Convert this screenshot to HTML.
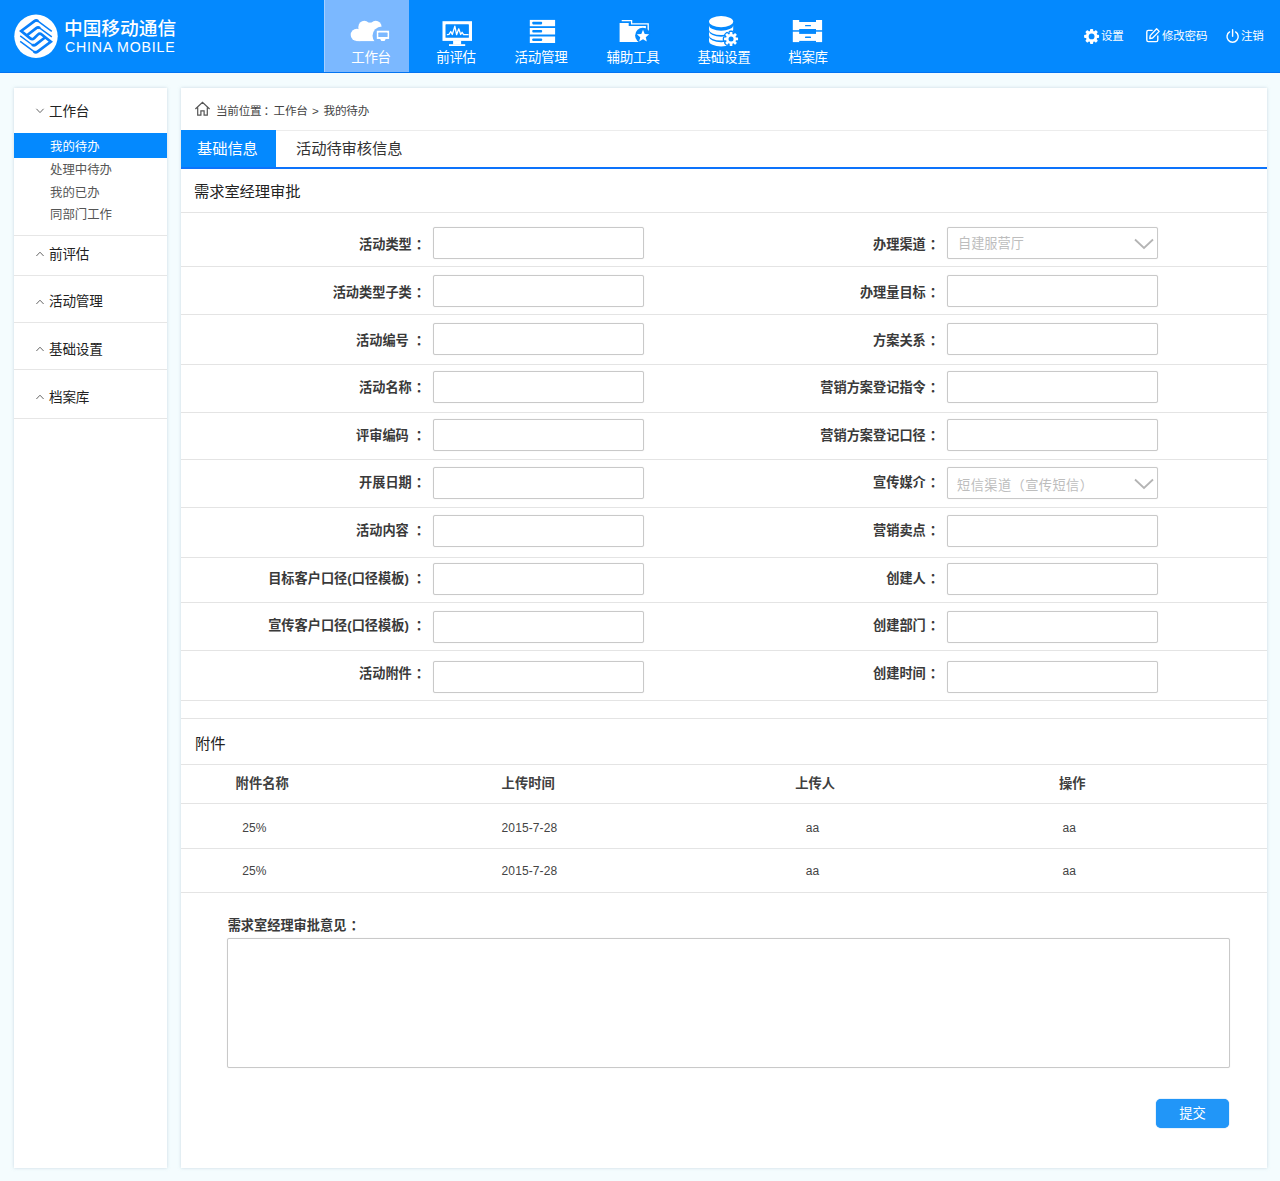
<!DOCTYPE html>
<html lang="zh-CN">
<head>
<meta charset="utf-8">
<title>我的待办</title>
<style>
*{box-sizing:border-box;margin:0;padding:0}
html,body{width:1280px;height:1181px;overflow:hidden}
body{position:relative;background:#f4fcfe;font-family:"Liberation Sans","Noto Sans CJK SC",sans-serif;color:#333;}
.abs{position:absolute}
#hdr{position:absolute;left:0;top:0;width:1280px;height:73px;background:#0489fe;border-bottom:1px solid #0274f2}
#hdr .act{position:absolute;left:324px;top:0;width:85px;height:72px;background:#7bb8ff;border-left:1px solid #a6cfff}
.nl{position:absolute;top:49px;width:100px;text-align:center;color:#fff;font-size:13.5px;line-height:18px;letter-spacing:-0.3px;white-space:nowrap}
.logo1{position:absolute;left:64px;top:17px;color:#fff;font-size:18.7px;line-height:24px;white-space:nowrap;font-weight:500}
.logo2{position:absolute;left:65px;top:38px;color:#fff;font-size:14.2px;line-height:18px;white-space:nowrap;letter-spacing:0.8px}
.tr{position:absolute;top:27px;color:#fff;font-size:11.5px;line-height:18px;white-space:nowrap;letter-spacing:-0.2px}
.panel{position:absolute;background:#fff;box-shadow:0 0 3px rgba(160,185,200,.5)}
#side{left:14px;top:88px;width:153px;height:1080px}
#main{left:181px;top:88px;width:1086px;height:1080px}
.sh{position:absolute;left:35px;font-size:13.6px;line-height:20px;color:#222;white-space:nowrap;letter-spacing:-0.2px}
.sline{position:absolute;left:0;width:153px;height:1px;background:#e6e6e6}
.si{position:absolute;left:36px;font-size:12.4px;line-height:18px;color:#555;white-space:nowrap}
.hl{position:absolute;left:0;width:1086px;height:1px;background:#e4e4e4}
.lb{position:absolute;font-size:13.2px;font-weight:700;line-height:20px;color:#3a3a3a;text-align:right;white-space:nowrap}
.c{margin-left:4px}
.c2{margin-left:7px}
.bc{position:absolute;font-size:11.6px;line-height:18px;color:#444;white-space:nowrap;letter-spacing:-0.25px}
.in{position:absolute;width:211px;height:32px;border:1px solid #c9c9c9;border-radius:2px;background:#fff;box-shadow:0 0 1px rgba(0,0,0,.15)}
.ph{position:absolute;left:10px;top:6px;font-size:13.2px;line-height:20px;color:#bdbdbd;white-space:nowrap}
.th{position:absolute;font-size:13.3px;font-weight:700;line-height:20px;color:#404040;white-space:nowrap}
.td{position:absolute;letter-spacing:0.1px;font-size:12px;line-height:20px;color:#444;white-space:nowrap}
</style>
</head>
<body>
<div id="hdr">
  <div class="act"></div>
  <!--LOGO-->
<svg class="abs" style="left:13px;top:13px" width="46" height="46" viewBox="0 0 46 46">
<circle cx="23" cy="23.3" r="21.7" fill="#fff"/>
<g fill="none" stroke="#0a7ffa" stroke-linejoin="miter" stroke-linecap="butt">
<path d="M25.15 8.25 L24.97 8.11 Q23.20 6.80 21.44 8.12 L8.20 18.00 L17.28 25.36 Q19.30 27.00 21.16 25.19 L24.84 21.61 Q26.70 19.80 28.72 21.44 L37.80 28.80 L24.56 38.68 Q22.80 40.00 21.03 38.69 L20.85 38.55" stroke-width="2.7"/>
<path d="M38.80 18.40 L24.97 8.11 Q23.20 6.80 21.44 8.12 L20.00 9.20" stroke-width="1.5"/>
<path d="M7.20 28.40 L21.03 38.69 Q22.80 40.00 24.56 38.68 L26.00 37.60" stroke-width="1.5"/>
<path d="M26.95 15.23 L26.77 15.10 Q25.00 13.80 23.26 15.14 L13.70 22.50" stroke-width="2.7"/>
<path d="M38.80 23.90 L26.78 15.10 Q25.00 13.80 23.23 15.10 L22.00 16.00" stroke-width="1.4"/>
<path d="M19.05 31.57 L19.23 31.70 Q21.00 33.00 22.74 31.66 L32.30 24.30" stroke-width="2.7"/>
<path d="M7.20 22.90 L19.22 31.70 Q21.00 33.00 22.77 31.70 L24.00 30.80" stroke-width="1.4"/>
</g></svg>
<!--/LOGO-->
  <div class="logo1">中国移动通信</div>
  <div class="logo2">CHINA MOBILE</div>
  <!--NAVICONS-->
<svg class="abs" style="left:348px;top:16px" width="46" height="30" viewBox="0 0 46 30">
<g fill="#fff"><circle cx="8.9" cy="18.9" r="6.2"/><ellipse cx="22" cy="9.2" rx="3.2" ry="2.6"/><circle cx="16.3" cy="10.7" r="5.9"/><circle cx="27.7" cy="10.7" r="5.9"/><rect x="10.6" y="10.7" width="23" height="14.4"/><rect x="8.4" y="18" width="4" height="7.1"/></g>
<circle cx="33.8" cy="19.8" r="9.3" fill="#7bb8ff"/>
<rect x="28.8" y="14.75" width="12.3" height="8.2" fill="#fff"/>
<rect x="30.3" y="16.6" width="9.3" height="4.5" rx="0.6" fill="#7bb8ff"/>
<path d="M32.2 22.9 H37.7 L36.6 24.9 H33.3 Z" fill="#fff"/>
</svg>
<svg class="abs" style="left:440px;top:18px" width="34" height="30" viewBox="0 0 34 30">
<rect x="2.5" y="3.2" width="29.5" height="19.7" fill="#fff"/>
<rect x="5.5" y="6.3" width="23.4" height="13.5" rx="0.6" fill="#0489fe"/>
<path d="M7.4 16.7 L9 16.4 L10.75 13.5 L12.3 16.5 L14.85 8.2 L16.6 16.7 L18.75 10.8 L20.7 16.5 L22.1 14.3 L23.6 16.7 L28.1 16.7" fill="none" stroke="#fff" stroke-width="1.3" stroke-linejoin="round" stroke-linecap="round"/>
<rect x="13.1" y="22.5" width="8" height="4" fill="#fff"/>
<rect x="9" y="26.2" width="16.2" height="1.8" fill="#fff"/>
</svg>
<svg class="abs" style="left:528px;top:18px" width="30" height="28" viewBox="0 0 30 28">
<g fill="#fff"><rect x="1.8" y="1.9" width="25.3" height="6.3"/><rect x="1.8" y="10" width="25.3" height="6.5"/><rect x="1.8" y="18.5" width="25.3" height="6.5"/></g>
<g fill="#0489fe"><rect x="4.3" y="3.7" width="9.8" height="2.7" rx="0.8"/><rect x="4.3" y="11.9" width="9.8" height="2.7" rx="0.8"/><rect x="4.3" y="20.4" width="9.8" height="2.7" rx="0.8"/></g>
</svg>
<svg class="abs" style="left:617px;top:17px" width="36" height="28" viewBox="0 0 36 28">
<path d="M4.7 3.6 H14.6 V6.9 H31.2 V15" fill="none" stroke="#fff" stroke-width="1.3"/>
<path d="M2.6 5.9 H11.7 V9 H28.9 V25.1 H2.6 Z" fill="#fff"/>
<circle cx="25.8" cy="18.5" r="7.7" fill="#0489fe"/>
<path d="M26.00 12.80 L27.70 16.95 L32.18 17.29 L28.76 20.20 L29.82 24.56 L26.00 22.20 L22.18 24.56 L23.24 20.20 L19.82 17.29 L24.30 16.95 Z" fill="#fff"/>
</svg>
<svg class="abs" style="left:706px;top:14px" width="36" height="34" viewBox="0 0 36 34">
<g fill="#fff">
<ellipse cx="15.1" cy="7.6" rx="12.1" ry="5.55"/>
<path d="M3 11.2 A12.1 5.55 0 0 0 27.2 11.2 V15.5 A12.1 5.55 0 0 1 3 15.5 Z"/>
<path d="M3 17.1 A12.1 5.55 0 0 0 27.2 17.1 V21 A12.1 5.55 0 0 1 3 21 Z"/>
<path d="M3 22.6 A12.1 5.55 0 0 0 27.2 22.6 V26.9 A12.1 5.55 0 0 1 3 26.9 Z"/>
</g>
<g fill="#0489fe" stroke="#0489fe" stroke-width="2.6" stroke-linejoin="round"><g transform="translate(25.05,24.9)"><rect x="-1.35" y="-7" width="2.7" height="14" rx="0.5" transform="rotate(0)"/><rect x="-1.35" y="-7" width="2.7" height="14" rx="0.5" transform="rotate(45)"/><rect x="-1.35" y="-7" width="2.7" height="14" rx="0.5" transform="rotate(90)"/><rect x="-1.35" y="-7" width="2.7" height="14" rx="0.5" transform="rotate(135)"/><circle r="5"/></g></g>
<g fill="#fff"><g transform="translate(25.05,24.9)"><rect x="-1.35" y="-7" width="2.7" height="14" rx="0.5" transform="rotate(0)"/><rect x="-1.35" y="-7" width="2.7" height="14" rx="0.5" transform="rotate(45)"/><rect x="-1.35" y="-7" width="2.7" height="14" rx="0.5" transform="rotate(90)"/><rect x="-1.35" y="-7" width="2.7" height="14" rx="0.5" transform="rotate(135)"/><circle r="5"/></g></g>
<circle cx="25.05" cy="24.9" r="2.5" fill="#0489fe"/>
</svg>
<svg class="abs" style="left:791px;top:18px" width="34" height="26" viewBox="0 0 34 26">
<rect x="1.8" y="2" width="29.3" height="10.2" fill="#fff"/>
<rect x="1.8" y="13.7" width="29.3" height="10.4" fill="#fff"/>
<g fill="#0489fe">
<rect x="8.2" y="1.5" width="16.8" height="2.5"/>
<rect x="8.2" y="11" width="16.8" height="4.9"/>
<rect x="8.2" y="22.9" width="16.8" height="1.7"/>
<rect x="14" y="6.9" width="6" height="1.4" rx="0.6"/>
<rect x="14" y="18.6" width="6" height="1.4" rx="0.6"/>
</g>
</svg>
<!--/NAVICONS-->
  <div class="nl" style="left:321px">工作台</div>
  <div class="nl" style="left:406px">前评估</div>
  <div class="nl" style="left:491px">活动管理</div>
  <div class="nl" style="left:583px">辅助工具</div>
  <div class="nl" style="left:674px">基础设置</div>
  <div class="nl" style="left:758px">档案库</div>
  <!--RIGHTICONS-->
<svg class="abs" style="left:1083px;top:28px" width="17" height="17" viewBox="0 0 17 17">
<g transform="translate(8.6,8.4)" fill="#fff">
<rect x="-1.6" y="-7.5" width="3.2" height="15" rx="0.9"/>
<rect x="-1.6" y="-7.5" width="3.2" height="15" rx="0.9" transform="rotate(45)"/>
<rect x="-1.6" y="-7.5" width="3.2" height="15" rx="0.9" transform="rotate(90)"/>
<rect x="-1.6" y="-7.5" width="3.2" height="15" rx="0.9" transform="rotate(135)"/>
<circle r="5.7"/><circle r="2.9" fill="#0489fe"/></g></svg>
<svg class="abs" style="left:1145px;top:27px" width="16" height="17" viewBox="0 0 16 17">
<path d="M7.6 3.4 H3.4 Q1.8 3.4 1.8 5 V13 Q1.8 14.6 3.4 14.6 H11.2 Q12.8 14.6 12.8 13 V8.6" fill="none" stroke="#fff" stroke-width="1.4"/>
<path d="M11.6 1.8 L14.2 4.4 L7.6 11 L4.8 11.6 L5.2 8.6 Z" fill="none" stroke="#fff" stroke-width="1.3" stroke-linejoin="round"/>
</svg>
<svg class="abs" style="left:1225px;top:28px" width="16" height="16" viewBox="0 0 16 16">
<path d="M4.6 3.9 A5.6 5.6 0 1 0 10.6 3.9" fill="none" stroke="#fff" stroke-width="1.4" stroke-linecap="round"/>
<path d="M7.6 1.8 V8.2" stroke="#fff" stroke-width="1.4" stroke-linecap="round"/>
</svg>
<!--/RIGHTICONS-->
  <div class="tr" style="left:1101px">设置</div>
  <div class="tr" style="left:1162px">修改密码</div>
  <div class="tr" style="left:1241px">注销</div>
</div>

<div id="side" class="panel">
  <!--SIDEICONS-->
<svg class="abs" style="left:21px;top:19px" width="10" height="8" viewBox="0 0 10 8"><path d="M1.4 1.8 L5 5.6 L8.6 1.8" fill="none" stroke="#666" stroke-width="1"/></svg>
<svg class="abs" style="left:21px;top:162px" width="10" height="8" viewBox="0 0 10 8"><path d="M1.4 6 L5 2.2 L8.6 6" fill="none" stroke="#666" stroke-width="1"/></svg>
<svg class="abs" style="left:21px;top:210px" width="10" height="8" viewBox="0 0 10 8"><path d="M1.4 6 L5 2.2 L8.6 6" fill="none" stroke="#666" stroke-width="1"/></svg>
<svg class="abs" style="left:21px;top:257px" width="10" height="8" viewBox="0 0 10 8"><path d="M1.4 6 L5 2.2 L8.6 6" fill="none" stroke="#666" stroke-width="1"/></svg>
<svg class="abs" style="left:21px;top:305px" width="10" height="8" viewBox="0 0 10 8"><path d="M1.4 6 L5 2.2 L8.6 6" fill="none" stroke="#666" stroke-width="1"/></svg>
<!--/SIDEICONS-->
  <div class="sh" style="top:14px">工作台</div>
  <div class="abs" style="left:0;top:45px;width:153px;height:25px;background:#0489fe"></div>
  <div class="si" style="top:50px;color:#fff">我的待办</div>
  <div class="si" style="top:73px">处理中待办</div>
  <div class="si" style="top:96px">我的已办</div>
  <div class="si" style="top:118px">同部门工作</div>
  <div class="sline" style="top:147px"></div>
  <div class="sh" style="top:157px">前评估</div>
  <div class="sline" style="top:187px"></div>
  <div class="sh" style="top:204px">活动管理</div>
  <div class="sline" style="top:234px"></div>
  <div class="sh" style="top:252px">基础设置</div>
  <div class="sline" style="top:281px"></div>
  <div class="sh" style="top:300px">档案库</div>
  <div class="sline" style="top:330px"></div>
</div>

<div id="main" class="panel">
  <!--MAIN-->
  <svg class="abs" style="left:13px;top:12px" width="17" height="17" viewBox="0 0 17 17"><path d="M1.4 9 L8.5 2.4 L15.6 9 M3.7 7.4 V15.2 H6.9 V10.8 H10.1 V15.2 H13.3 V7.4" fill="none" stroke="#555" stroke-width="1.2" stroke-linejoin="miter"/></svg>
  <div class="bc" style="left:35px;top:14px">当前位置<span style="margin-left:2px">：</span></div>
  <div class="bc" style="left:92.6px;top:14px">工作台</div>
  <div class="bc" style="left:131px;top:14px">&gt;</div>
  <div class="bc" style="left:142.6px;top:14px">我的待办</div>
  <div class="hl" style="top:42px;background:#ececec"></div>
  <div class="abs" style="left:0;top:42px;width:95px;height:38px;background:#0489fe"></div>
  <div class="abs" style="left:0;top:79px;width:1086px;height:2px;background:#0d73fb"></div>
  <div class="abs" style="left:16px;top:50px;font-size:15.3px;line-height:22px;color:#fff;white-space:nowrap;letter-spacing:-0.1px">基础信息</div>
  <div class="abs" style="left:115px;top:50px;font-size:15.3px;line-height:22px;color:#333;white-space:nowrap;letter-spacing:-0.1px">活动待审核信息</div>
  <div class="abs" style="left:13px;top:93px;font-size:15.3px;line-height:22px;color:#222;white-space:nowrap;letter-spacing:-0.1px">需求室经理审批</div>
  <div class="hl" style="top:124px"></div>
  <div class="hl" style="top:178px"></div>
  <div class="hl" style="top:226px"></div>
  <div class="hl" style="top:276px"></div>
  <div class="hl" style="top:324px"></div>
  <div class="hl" style="top:371px"></div>
  <div class="hl" style="top:419px"></div>
  <div class="hl" style="top:469px"></div>
  <div class="hl" style="top:514px"></div>
  <div class="hl" style="top:562px"></div>
  <div class="hl" style="top:612px"></div>
  <div class="hl" style="top:630px"></div>
  <div class="hl" style="top:676px"></div>
  <div class="hl" style="top:715px"></div>
  <div class="hl" style="top:760px"></div>
  <div class="hl" style="top:804px"></div>
  <div class="lb" style="right:838px;top:147.4px">活动类型<span class="c">：</span></div>
  <div class="in" style="left:252px;top:139px"></div>
  <div class="lb" style="right:324px;top:147.4px">办理渠道<span class="c">：</span></div>
  <div class="in" style="left:766px;top:139px"><div class="ph">自建服营厅</div><svg class="abs" style="right:3px;top:10px" width="20" height="12" viewBox="0 0 20 12"><path d="M1 1.5 L10 10 L19 1.5" fill="none" stroke="#b4b4b4" stroke-width="1.8"/></svg></div>
  <div class="lb" style="right:838px;top:195.0px">活动类型子类<span class="c">：</span></div>
  <div class="in" style="left:252px;top:187px"></div>
  <div class="lb" style="right:324px;top:195.0px">办理量目标<span class="c">：</span></div>
  <div class="in" style="left:766px;top:187px"></div>
  <div class="lb" style="right:838px;top:242.6px">活动编号<span class="c c2">：</span></div>
  <div class="in" style="left:252px;top:235px"></div>
  <div class="lb" style="right:324px;top:242.6px">方案关系<span class="c">：</span></div>
  <div class="in" style="left:766px;top:235px"></div>
  <div class="lb" style="right:838px;top:290.2px">活动名称<span class="c">：</span></div>
  <div class="in" style="left:252px;top:283px"></div>
  <div class="lb" style="right:324px;top:290.2px">营销方案登记指令<span class="c">：</span></div>
  <div class="in" style="left:766px;top:283px"></div>
  <div class="lb" style="right:838px;top:337.8px">评审编码<span class="c c2">：</span></div>
  <div class="in" style="left:252px;top:331px"></div>
  <div class="lb" style="right:324px;top:337.8px">营销方案登记口径<span class="c">：</span></div>
  <div class="in" style="left:766px;top:331px"></div>
  <div class="lb" style="right:838px;top:385.4px">开展日期<span class="c">：</span></div>
  <div class="in" style="left:252px;top:379px"></div>
  <div class="lb" style="right:324px;top:385.4px">宣传媒介<span class="c">：</span></div>
  <div class="in" style="left:766px;top:379px"><div class="ph" style="top:7.5px;letter-spacing:0.45px;left:9px">短信渠道（宣传短信）</div><svg class="abs" style="right:3px;top:10px" width="20" height="12" viewBox="0 0 20 12"><path d="M1 1.5 L10 10 L19 1.5" fill="none" stroke="#b4b4b4" stroke-width="1.8"/></svg></div>
  <div class="lb" style="right:838px;top:433.0px">活动内容<span class="c c2">：</span></div>
  <div class="in" style="left:252px;top:427px"></div>
  <div class="lb" style="right:324px;top:433.0px">营销卖点<span class="c">：</span></div>
  <div class="in" style="left:766px;top:427px"></div>
  <div class="lb" style="right:838px;top:480.6px">目标客户口径(口径模板)<span class="c c2">：</span></div>
  <div class="in" style="left:252px;top:475px"></div>
  <div class="lb" style="right:324px;top:480.6px">创建人<span class="c">：</span></div>
  <div class="in" style="left:766px;top:475px"></div>
  <div class="lb" style="right:838px;top:528.2px">宣传客户口径(口径模板)<span class="c c2">：</span></div>
  <div class="in" style="left:252px;top:523px"></div>
  <div class="lb" style="right:324px;top:528.2px">创建部门<span class="c">：</span></div>
  <div class="in" style="left:766px;top:523px"></div>
  <div class="lb" style="right:838px;top:575.8px">活动附件<span class="c">：</span></div>
  <div class="in" style="left:252px;top:573px"></div>
  <div class="lb" style="right:324px;top:575.8px">创建时间<span class="c">：</span></div>
  <div class="in" style="left:766px;top:573px"></div>
  <div class="abs" style="left:14px;top:645px;font-size:15.3px;line-height:22px;color:#222;white-space:nowrap">附件</div>
  <div class="th" style="left:54.6px;top:686px">附件名称</div>
  <div class="th" style="left:320.6px;top:686px">上传时间</div>
  <div class="th" style="left:614.2px;top:686px">上传人</div>
  <div class="th" style="left:878px;top:686px">操作</div>
  <div class="td" style="left:61.2px;top:730px">25%</div>
  <div class="td" style="left:320.6px;top:730px">2015-7-28</div>
  <div class="td" style="left:624.7px;top:730px">aa</div>
  <div class="td" style="left:881.5px;top:730px">aa</div>
  <div class="td" style="left:61.2px;top:773px">25%</div>
  <div class="td" style="left:320.6px;top:773px">2015-7-28</div>
  <div class="td" style="left:624.7px;top:773px">aa</div>
  <div class="td" style="left:881.5px;top:773px">aa</div>
  <div class="lb" style="left:46.7px;top:828px">需求室经理审批意见<span class="c">：</span></div>
  <div class="in" style="left:46px;top:850px;width:1003px;height:130px"></div>
  <div class="abs" style="left:975px;top:1011px;width:73px;height:29px;background:#2196f8;border-radius:5px;color:#fff;font-size:13.3px;line-height:29px;text-align:center;box-shadow:0 0 1px #1a86e8">提交</div>
</div>
</body>
</html>
